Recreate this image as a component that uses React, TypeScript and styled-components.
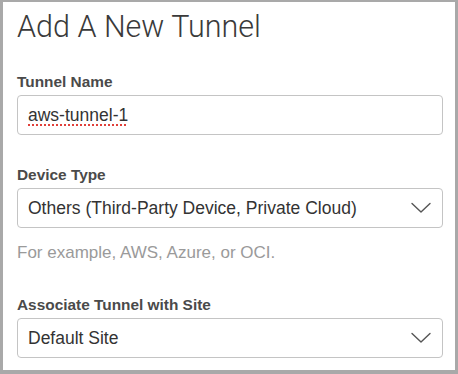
import styled, { createGlobalStyle } from "styled-components";

const GlobalStyle = createGlobalStyle`
  html, body {
    margin: 0;
    padding: 0;
    background: #ffffff;
  }
  * {
    box-sizing: border-box;
  }
`;

interface SelectProps {
  value: string;
}

function Chevron() {
  return (
    <svg width="20" height="12" viewBox="0 0 20 12" fill="none">
      <path d="M1 1.5 L10 10 L19 1.5" stroke="#555" strokeWidth="1.4" strokeLinecap="round" strokeLinejoin="round" />
    </svg>
  );
}

function SelectBox({ value }: SelectProps) {
  return (
    <FieldBox>
      <FieldText>{value}</FieldText>
      <Chevron />
    </FieldBox>
  );
}

function App() {
  return (
    <>
      <GlobalStyle />
      <Panel>
        <Title>Add A New Tunnel</Title>

        <Field>
          <Label>Tunnel Name</Label>
          <FieldBox>
            <FieldText>
              <Misspelled>aws-tunnel-1</Misspelled>
            </FieldText>
          </FieldBox>
        </Field>

        <Field>
          <Label>Device Type</Label>
          <SelectBox value="Others (Third-Party Device, Private Cloud)" />
          <Helper>For example, AWS, Azure, or OCI.</Helper>
        </Field>

        <Field>
          <Label>Associate Tunnel with Site</Label>
          <SelectBox value="Default Site" />
        </Field>
      </Panel>
    </>
  );
}

const Panel = styled.div`
  width: 458px;
  height: 374px;
  border-style: solid;
  border-color: #a9a9a9;
  border-width: 2px 3px 4px 3px;
  padding: 0 12px 0 14px;
  display: flex;
  flex-direction: column;
  font-family: "Liberation Sans", Arial, sans-serif;
  overflow: hidden;
`;

const Title = styled.h1`
  margin: 7px 0 0;
  font-family: Roboto, "Liberation Sans", sans-serif;
  font-weight: 300;
  font-size: 30.5px;
  line-height: 36px;
  color: #3a3a3a;
`;

const Field = styled.div`
  display: flex;
  flex-direction: column;
  margin-top: 28px;

  & + & {
    margin-top: 31px;
  }
`;

const Label = styled.label`
  font-size: 15.4px;
  line-height: 18px;
  font-weight: 700;
  color: #4a4a4a;
  margin-bottom: 4px;
`;

const FieldBox = styled.div`
  height: 40px;
  border: 1px solid #c4c4c4;
  border-radius: 4px;
  padding: 0 11px 0 10px;
  display: flex;
  align-items: center;
  justify-content: space-between;
`;

const FieldText = styled.span`
  font-size: 17.5px;
  color: #333;
`;

const Misspelled = styled.span`
  text-decoration: underline dotted #e0403a;
  text-underline-offset: 4px;
  text-decoration-thickness: 1.5px;
`;

const Helper = styled.p`
  margin: 15px 0 2px;
  font-size: 17px;
  line-height: 20px;
  color: #9a9a9a;
`;

export default App;
